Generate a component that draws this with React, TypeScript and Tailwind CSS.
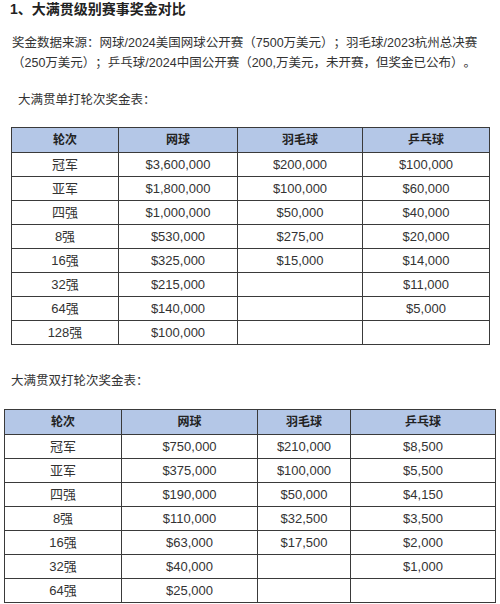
import React from "react";

const font = { fontFamily: '"Liberation Sans", "Noto Sans CJK SC", sans-serif' };

type Row = [string, string, string, string];

const singles: Row[] = [
  ["冠军", "$3,600,000", "$200,000", "$100,000"],
  ["亚军", "$1,800,000", "$100,000", "$60,000"],
  ["四强", "$1,000,000", "$50,000", "$40,000"],
  ["8强", "$530,000", "$275,00", "$20,000"],
  ["16强", "$325,000", "$15,000", "$14,000"],
  ["32强", "$215,000", "", "$11,000"],
  ["64强", "$140,000", "", "$5,000"],
  ["128强", "$100,000", "", ""],
];

const doubles: Row[] = [
  ["冠军", "$750,000", "$210,000", "$8,500"],
  ["亚军", "$375,000", "$100,000", "$5,500"],
  ["四强", "$190,000", "$50,000", "$4,150"],
  ["8强", "$110,000", "$32,500", "$3,500"],
  ["16强", "$63,000", "$17,500", "$2,000"],
  ["32强", "$40,000", "", "$1,000"],
  ["64强", "$25,000", "", ""],
];

function PrizeTable({ rows, widths }: { rows: Row[]; widths: number[] }) {
  const total = widths.reduce((a, b) => a + b, 0);
  return (
    <table
      className="table-fixed border-collapse text-[13px] text-[#333]"
      style={{ width: total }}
    >
      <colgroup>
        {widths.map((w, i) => (
          <col key={i} style={{ width: w }} />
        ))}
      </colgroup>
      <thead>
        <tr className="h-[25px] bg-[#b4c7e7]">
          {["轮次", "网球", "羽毛球", "乒乓球"].map((h) => (
            <th
              key={h}
              className="border border-[#3a3a3a] p-0 text-center font-semibold text-[12px] text-[#222]"
            >
              {h}
            </th>
          ))}
        </tr>
      </thead>
      <tbody>
        {rows.map((r, i) => (
          <tr key={i} className="h-[24px]">
            {r.map((c, j) => (
              <td key={j} className="border border-[#3a3a3a] p-0 text-center">
                {c}
              </td>
            ))}
          </tr>
        ))}
      </tbody>
    </table>
  );
}

export default function App() {
  return (
    <div
      className="w-[500px] h-[604px] overflow-hidden bg-white text-[#333] [text-spacing-trim:space-all]"
      style={font}
    >
      <div className="pl-[10px] text-[14px] leading-[18px] font-bold text-[#222]">
        1、大满贯级别赛事奖金对比
      </div>
      <p className="mt-[15px] pl-[12px] text-[12.5px] leading-[20px] text-[#333]">
        奖金数据来源：网球/2024美国网球公开赛（7500万美元）；羽毛球/2023杭州总决赛
        <br />
        （250万美元）；乒乓球/2024中国公开赛（200,万美元，未开赛，但奖金已公布）。
      </p>
      <div className="mt-[17px] pl-[18px] text-[12.5px] leading-[20px]">大满贯单打轮次奖金表：</div>
      <div className="mt-[17px] pl-[11px]">
        <PrizeTable rows={singles} widths={[107, 119, 125, 127]} />
      </div>
      <div className="mt-[26px] pl-[11px] text-[12.5px] leading-[20px]">大满贯双打轮次奖金表：</div>
      <div className="mt-[18px] pl-[4px]">
        <PrizeTable rows={doubles} widths={[117, 136, 93, 145]} />
      </div>
    </div>
  );
}
